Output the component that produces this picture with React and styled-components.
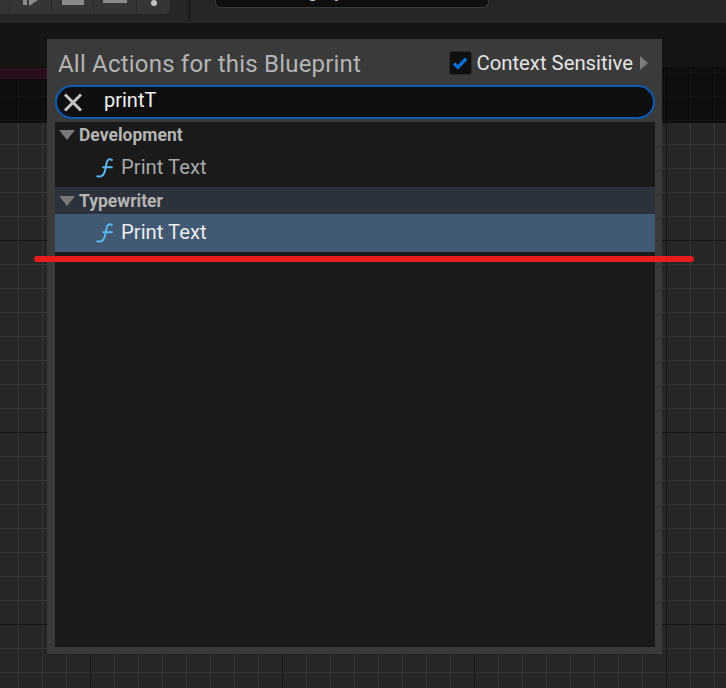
import React from 'react';
import styled, { createGlobalStyle } from 'styled-components';

const actionGroups = [
  { name: 'Development', shaded: false, selected: false },
  { name: 'Typewriter', shaded: true, selected: true },
];

function FunctionIcon() {
  return (
    <FunctionSvg viewBox="0 0 18 20" width="18" height="20">
      <path d="M16.4 2.6C15 .6 12.2 .8 11.2 3.2C10 6 9.8 11 8.4 14.6C7.2 18 4 19.6 .6 17.8" />
      <path d="M6.4 9.2H16.6" />
    </FunctionSvg>
  );
}

function App() {
  return (
    <Page>
      <GlobalStyle />
      <Toolbar>
        <ButtonGroup>
          <ToolButton $width={10} />
          <ToolButton $width={42}>
            <PlayBar />
            <PlayArrow />
          </ToolButton>
          <ToolButton $width={42}>
            <ToolGlyph $width={22} $height={5} />
          </ToolButton>
          <ToolButton $width={43}>
            <ToolGlyph $width={24} $height={3} />
          </ToolButton>
          <ToolButton $width={33} $last>
            <ToolDot />
          </ToolButton>
        </ButtonGroup>
        <ToolDivider />
        <DebugBox>
          <DebugText>Debug by</DebugText>
        </DebugBox>
      </Toolbar>
      <TabStrip />
      <Graph>
        <GraphShade />
        <WireBand />
      </Graph>
      <ActionMenu>
        <MenuHeader>
          <MenuTitle>All Actions for this Blueprint</MenuTitle>
          <ContextToggle>
            <CheckBox>
              <svg viewBox="0 0 16 14" width="16" height="14">
                <path d="M1.8 7.4L6 11.2L14.2 2.6" fill="none" stroke="#0a70d8" strokeWidth="3.4" />
              </svg>
            </CheckBox>
            <ContextLabel>Context Sensitive</ContextLabel>
            <MoreArrow />
          </ContextToggle>
        </MenuHeader>
        <SearchBox>
          <ClearIcon viewBox="0 0 20 19" width="20" height="19">
            <path d="M2 1.5L18 17.5M18 1.5L2 17.5" />
          </ClearIcon>
          <SearchText>printT</SearchText>
        </SearchBox>
        <ActionList>
          {actionGroups.map((group) => (
            <div key={group.name}>
              <GroupHeader $shaded={group.shaded}>
                <Caret />
                <GroupName>{group.name}</GroupName>
              </GroupHeader>
              <ActionRow $selected={group.selected}>
                <FunctionIcon />
                <ActionName $selected={group.selected}>Print Text</ActionName>
              </ActionRow>
            </div>
          ))}
        </ActionList>
      </ActionMenu>
      <RedMark />
    </Page>
  );
}

export default App;

const GlobalStyle = createGlobalStyle`
  html, body {
    margin: 0;
    padding: 0;
    background: #262626;
  }
  body {
    overflow: hidden;
    font-family: Roboto, "Liberation Sans", sans-serif;
  }
`;

const Page = styled.div`
  position: relative;
  width: 726px;
  height: 688px;
  display: flex;
  flex-direction: column;
  overflow: hidden;
`;

const Toolbar = styled.div`
  height: 23px;
  display: flex;
  align-items: flex-start;
  background: #262626;
`;

const ButtonGroup = styled.div`
  width: 170px;
  height: 14px;
  display: flex;
  background: #353535;
  border-bottom-right-radius: 6px;
  overflow: hidden;
`;

const ToolButton = styled.div`
  width: ${(p) => p.$width}px;
  height: 14px;
  display: flex;
  justify-content: center;
  gap: 2px;
  border-right: ${(p) => (p.$last ? 'none' : '1px solid #2a2a2a')};
  box-sizing: border-box;
`;

const PlayBar = styled.div`
  width: 4px;
  height: 5px;
  background: #8a8a8a;
`;

const PlayArrow = styled.div`
  width: 0;
  height: 0;
  border-left: 9px solid #8a8a8a;
  border-bottom: 6px solid transparent;
`;

const ToolGlyph = styled.div`
  width: ${(p) => p.$width}px;
  height: ${(p) => p.$height}px;
  background: #8a8a8a;
`;

const ToolDot = styled.div`
  width: 6px;
  height: 6px;
  border-radius: 50%;
  background: #c4c4c4;
`;

const ToolDivider = styled.div`
  width: 3px;
  height: 21px;
  margin-left: 18px;
  background: #1c1c1c;
`;

const DebugBox = styled.div`
  width: 274px;
  height: 8px;
  margin-left: 24px;
  padding-left: 45px;
  display: flex;
  align-items: flex-end;
  overflow: hidden;
  box-sizing: border-box;
  background: #0f0f0f;
  border: 1px solid #3a3a3a;
  border-top: none;
  border-radius: 0 0 6px 6px;
`;

const DebugText = styled.span`
  flex: none;
  margin-bottom: 7px;
  font-size: 20px;
  line-height: 20px;
  color: #c8c8c8;
`;

const TabStrip = styled.div`
  height: 44px;
  background: #151515;
`;

const Graph = styled.div`
  position: relative;
  flex: 1;
  background-color: #262626;
  background-image:
    linear-gradient(to right, #161616 1px, transparent 1px),
    linear-gradient(to bottom, #161616 1px, transparent 1px),
    linear-gradient(to right, #353535 1px, transparent 1px),
    linear-gradient(to bottom, #353535 1px, transparent 1px);
  background-size: 192px 192px, 192px 192px, 24px 24px, 24px 24px;
  background-position: 90px 0, 0 173px, 18px 0, 0 5px;
`;

const GraphShade = styled.div`
  position: absolute;
  top: 0;
  left: 0;
  right: 0;
  height: 56px;
  background: rgba(0, 0, 0, 0.62);
`;

const WireBand = styled.div`
  position: absolute;
  top: 1px;
  left: 0;
  width: 47px;
  height: 11px;
  background: #2b0e1b;
`;

const ActionMenu = styled.div`
  position: absolute;
  top: 39px;
  left: 47px;
  width: 615px;
  height: 615px;
  box-sizing: border-box;
  padding: 0 7px 7px 8px;
  display: flex;
  flex-direction: column;
  background: #3a3a3a;
`;

const MenuHeader = styled.div`
  height: 46px;
  flex: none;
  display: flex;
  align-items: center;
  justify-content: space-between;
`;

const MenuTitle = styled.div`
  margin: 3px 0 0 3px;
  font-size: 24px;
  letter-spacing: 0.2px;
  color: #b4b4b4;
`;

const ContextToggle = styled.div`
  display: flex;
  align-items: center;
  margin-top: 2px;
`;

const CheckBox = styled.div`
  width: 23px;
  height: 24px;
  display: flex;
  align-items: center;
  justify-content: center;
  box-sizing: border-box;
  background: #0f0f0f;
  border: 1px solid #2a2a2a;
  border-radius: 3px;
`;

const ContextLabel = styled.span`
  margin-left: 5px;
  font-size: 20.3px;
  color: #e4e4e4;
`;

const MoreArrow = styled.div`
  width: 0;
  height: 0;
  margin: 0 7px 0 7px;
  border-left: 8px solid #7c7c7c;
  border-top: 7px solid transparent;
  border-bottom: 7px solid transparent;
`;

const SearchBox = styled.div`
  height: 34px;
  flex: none;
  display: flex;
  align-items: center;
  box-sizing: border-box;
  padding-left: 6px;
  background: #0f0f0f;
  border: 2px solid #0d5bb0;
  border-radius: 17px;
`;

const ClearIcon = styled.svg`
  flex: none;
  fill: none;
  stroke: #c4c4c4;
  stroke-width: 3;
`;

const SearchText = styled.span`
  margin: -4px 0 0 21px;
  font-size: 20px;
  color: #f0f0f0;
`;

const ActionList = styled.div`
  flex: 1;
  margin-top: 3px;
  background: #1a1a1a;
`;

const GroupHeader = styled.div`
  height: ${(p) => (p.$shaded ? 27 : 26)}px;
  display: flex;
  align-items: center;
  padding-left: 4px;
  background: ${(p) => (p.$shaded ? '#2b323b' : 'transparent')};
`;

const Caret = styled.div`
  width: 0;
  height: 0;
  border-top: 10px solid #787878;
  border-left: 8px solid transparent;
  border-right: 8px solid transparent;
`;

const GroupName = styled.span`
  margin-left: 4px;
  font-size: 17.5px;
  font-weight: 700;
  color: #b4b4b4;
`;

const ActionRow = styled.div`
  height: ${(p) => (p.$selected ? 38 : 39)}px;
  display: flex;
  align-items: center;
  padding-left: 41px;
  background: ${(p) => (p.$selected ? '#415973' : 'transparent')};
`;

const FunctionSvg = styled.svg`
  flex: none;
  fill: none;
  stroke: #5ab6ee;
  stroke-width: 2;
`;

const ActionName = styled.span`
  margin: -2px 0 0 7px;
  font-size: 20.3px;
  color: ${(p) => (p.$selected ? '#ececec' : '#a8a8a8')};
`;

const RedMark = styled.div`
  position: absolute;
  top: 256px;
  left: 34px;
  width: 660px;
  height: 6px;
  border-radius: 3px;
  background: #ea1c1f;
`;
